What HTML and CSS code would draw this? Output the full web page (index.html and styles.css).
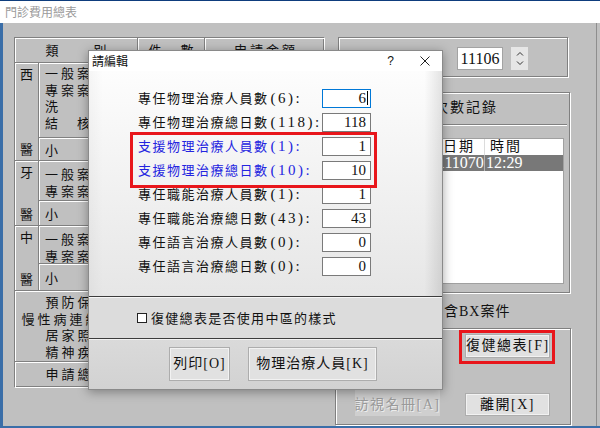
FILE: index.html
```html
<!DOCTYPE html>
<html lang="zh-Hant">
<head>
    <meta charset="UTF-8">
    <meta name="viewport" content="width=device-width, initial-scale=1.0">
    <title>門診費用總表</title>
    <link rel="stylesheet" href="styles.css">
</head>
<body>
    <div class="app-title">門診費用總表</div>

    <div class="client">
        <div class="fee-table">
            <div class="th th-kind">類　　別</div>
            <div class="th">件　數</div>
            <div class="th">申請金額</div>

            <div class="cell side">西<span>醫</span></div>
            <div class="cell items">一般案件<br>專案案件<br>洗　　　腎<br>結　核</div>
            <div class="cell"></div>
            <div class="cell"></div>
            <div class="cell sub">小　　　計</div>
            <div class="cell"></div>
            <div class="cell"></div>

            <div class="cell side">牙<span>醫</span></div>
            <div class="cell items items-short">一般案件<br>專案案件</div>
            <div class="cell"></div>
            <div class="cell"></div>
            <div class="cell sub">小　　　計</div>
            <div class="cell"></div>
            <div class="cell"></div>

            <div class="cell side">中<span>醫</span></div>
            <div class="cell items items-short">一般案件<br>專案案件</div>
            <div class="cell"></div>
            <div class="cell"></div>
            <div class="cell sub">小　　　計</div>
            <div class="cell"></div>
            <div class="cell"></div>

            <div class="cell other">預防保健<br>慢性病連續處方<br>居家照護<br>精神疾病</div>
            <div class="cell"></div>
            <div class="cell"></div>

            <div class="cell total">申請總額</div>
            <div class="cell"></div>
            <div class="cell"></div>
        </div>

        <div class="side-panel">
            <div class="group group-month">
                <div class="spin">
                    <div class="spin-value">11106</div>
                    <div class="spin-buttons">
                        <svg width="8" height="5" viewBox="0 0 8 5"><polyline points="1,4.5 4,1.5 7,4.5" fill="none" stroke="#333" stroke-width="1"/></svg>
                        <svg width="8" height="5" viewBox="0 0 8 5"><polyline points="1,0.5 4,3.5 7,0.5" fill="none" stroke="#333" stroke-width="1"/></svg>
                    </div>
                </div>
            </div>

            <div class="group group-log">
                <div class="group-title">列印次數記錄</div>
                <div class="rule"></div>
                <div class="log-list">
                    <div class="log-row log-head">
                        <span class="col-seq">序</span>
                        <span class="col-date">日期</span>
                        <span class="col-time">時間</span>
                    </div>
                    <div class="log-row selected">
                        <span class="col-seq">1</span>
                        <span class="col-date">1110701</span>
                        <span class="col-time">12:29</span>
                    </div>
                </div>
            </div>

            <div class="bx-option"><span class="check"></span>含BX案件</div>

            <div class="group group-actions">
                <div class="action-slot"></div>
                <div class="mark-wrap"><button class="btn">復健總表[F]</button></div>
                <div class="btn-disabled">訪視名冊[A]</div>
                <div class="exit-slot"><button class="btn">離開[X]</button></div>
            </div>
        </div>
    </div>

    <div class="dialog">
        <div class="dlg-title">
            <span>請編輯</span>
            <span class="dlg-help">?</span>
            <svg class="dlg-close" width="10" height="10" viewBox="0 0 10 10"><path d="M0.5 0.5 L9.5 9.5 M9.5 0.5 L0.5 9.5" stroke="#222" stroke-width="1"/></svg>
        </div>

        <div class="dlg-body">
            <div class="field">
                <span class="field-label">專任物理治療人員數<span class="num">(6):</span></span>
                <span class="field-input focus">6<span class="caret"></span></span>
            </div>
            <div class="field">
                <span class="field-label">專任物理治療總日數<span class="num">(118):</span></span>
                <span class="field-input">118</span>
            </div>
            <div class="field">
                <span class="field-label support">支援物理治療人員數<span class="num">(1):</span></span>
                <span class="field-input">1</span>
            </div>
            <div class="field">
                <span class="field-label support">支援物理治療總日數<span class="num">(10):</span></span>
                <span class="field-input">10</span>
            </div>
            <div class="field field-gap">
                <span class="field-label">專任職能治療人員數<span class="num">(1):</span></span>
                <span class="field-input">1</span>
            </div>
            <div class="field">
                <span class="field-label">專任職能治療總日數<span class="num">(43):</span></span>
                <span class="field-input">43</span>
            </div>
            <div class="field">
                <span class="field-label">專任語言治療人員數<span class="num">(0):</span></span>
                <span class="field-input">0</span>
            </div>
            <div class="field">
                <span class="field-label">專任語言治療總日數<span class="num">(0):</span></span>
                <span class="field-input">0</span>
            </div>
        </div>

        <div class="dlg-option"><span class="check"></span>復健總表是否使用中區的樣式</div>

        <div class="dlg-buttons">
            <button class="btn btn-print">列印[O]</button>
            <button class="btn btn-staff">物理治療人員[K]</button>
        </div>

        <div class="mark mark-support"></div>
    </div>
</body>
</html>
```

FILE: styles.css
```css
:root {
    --face: #c0c0c0;
    --dark: #808080;
    --btn-face: #e1e1e1;
    --btn-line: #adadad;
    --mark: #e8161b;
    --ui-font: "Liberation Serif", "Noto Sans CJK TC", serif;
}

body {
    margin: 0;
    width: 600px;
    height: 428px;
    position: relative;
    overflow: hidden;
    background: var(--face);
    font-family: var(--ui-font);
    color: #111;
}

.app-title {
    height: 22px;
    border-top: 1px solid #0e3d7d;
    padding-left: 5px;
    background: #fff;
    color: #9b9b9b;
    font-family: "Noto Sans CJK TC", sans-serif;
    font-size: 12px;
    line-height: 22px;
}

.client {
    display: flex;
    gap: 11px;
    box-sizing: border-box;
    height: 405px;
    padding: 14px 0 0 11px;
    border-left: 3px solid #3a6ea8;
    border-bottom: 2px solid #3a6ea8;
    box-shadow: inset -3px 0 0 var(--face), inset -4px 0 0 #8e8e8e;
}

/* left fee table */
.fee-table {
    flex: none;
    display: grid;
    grid-template-columns: 24px 99px 67px 120px;
    grid-template-rows: 25px 75px 23px 40px 25px 38px 27px 71px 26px;
    height: 350px;
    box-shadow: inset -1px -1px 0 var(--dark), 1px 1px 0 #fff;
    font-family: "Noto Sans CJK TC", sans-serif;
    font-size: 13px;
    line-height: 16.5px;
    letter-spacing: 3px;
    white-space: nowrap;
    overflow: hidden;
}

.th,
.cell {
    border-left: 1px solid var(--dark);
    border-top: 1px solid var(--dark);
    box-shadow: inset 1px 1px 0 #fff;
}

.th {
    display: flex;
    align-items: center;
    justify-content: center;
    padding-left: 3px;
}

.th-kind {
    grid-column: span 2;
}

.side {
    grid-row: span 2;
    display: flex;
    flex-direction: column;
    justify-content: space-between;
    align-items: center;
    padding: 3px 0;
    line-height: 16px;
    letter-spacing: 0;
}

.items {
    padding: 2px 0 0 6px;
}

.items-short {
    padding-top: 5px;
}

.sub {
    display: flex;
    align-items: center;
    padding: 2px 0 0 6px;
}

.other {
    grid-column: span 2;
    padding: 3px 0 0 3px;
    text-align: center;
}

.total {
    grid-column: span 2;
    display: flex;
    align-items: center;
    justify-content: center;
    padding-left: 3px;
}

/* right side */
.side-panel {
    flex: none;
    width: 236px;
    display: flex;
    flex-direction: column;
}

.group {
    box-sizing: border-box;
    border: 1px solid var(--dark);
    box-shadow: inset 1px 1px 0 #fff, 1px 1px 0 #fff;
}

.group-month {
    margin-left: 3px;
    width: 230px;
    height: 40px;
    padding: 9px 0 0 118px;
}

.spin {
    display: flex;
    gap: 8px;
}

.spin-value {
    width: 46px;
    height: 23px;
    box-sizing: border-box;
    border: 1px solid #a3a3a3;
    background: #fff;
    font-size: 16px;
    line-height: 21px;
    text-align: center;
}

.spin-buttons {
    width: 17px;
    height: 23px;
    background: #e6e6e6;
    display: flex;
    flex-direction: column;
    align-items: center;
    justify-content: space-evenly;
}

.spin-buttons svg {
    display: block;
}

.group-log {
    margin: 15px 0 0 3px;
    width: 232px;
    height: 201px;
    padding: 7px 2px 0 7px;
}

.group-title {
    padding-left: 56px;
    font-size: 14px;
    line-height: 16px;
    letter-spacing: 2px;
    white-space: nowrap;
}

.rule {
    margin-top: 8px;
    border-top: 1px solid var(--dark);
    border-bottom: 1px solid #fff;
}

.log-list {
    margin: 12px 3px 0 0;
    height: 146px;
    box-sizing: border-box;
    border: 1px solid #a0a0a0;
    background: #fff;
}

.log-row {
    display: grid;
    grid-template-columns: 90px 48px 1fr;
    height: 16px;
    line-height: 16px;
    white-space: nowrap;
}

.log-row span {
    overflow: hidden;
    box-sizing: border-box;
}

.log-head {
    font-size: 14px;
    letter-spacing: 2px;
}

.log-head .col-date {
    padding-left: 6px;
    border-right: 1px solid #dcdcdc;
}

.log-head .col-time {
    padding-left: 5px;
}

.selected {
    background: #787878;
    color: #fff;
    font-size: 16px;
}

.selected .col-date {
    border-right: 1px solid #b4b4b4;
}

.selected .col-time {
    padding-left: 1px;
}

.bx-option {
    margin-top: 11px;
    height: 16px;
    display: flex;
    align-items: center;
    padding-left: 91px;
    font-size: 14px;
    line-height: 16px;
    letter-spacing: 1px;
    white-space: nowrap;
}

.check {
    display: inline-block;
    box-sizing: border-box;
    width: 10px;
    height: 10px;
    border: 1px solid #222;
    background: #fff;
}

.bx-option .check {
    width: 13px;
    height: 13px;
    margin-right: 5px;
}

.group-actions {
    margin-top: 8px;
    width: 236px;
    height: 97px;
    display: grid;
    grid-template-columns: 85px 96px;
    grid-template-rows: 34px 26px;
    column-gap: 19px;
    row-gap: 26px;
    align-content: start;
    padding: 1px 0 0 19px;
}

.btn {
    margin: 0;
    padding: 0;
    box-sizing: border-box;
    background: var(--btn-face);
    border: 1px solid var(--btn-line);
    box-shadow: inset 0 0 0 1px #f2f2f2;
    color: #111;
    font-family: var(--ui-font);
    font-size: 14px;
    line-height: 16px;
    letter-spacing: 1.5px;
    white-space: nowrap;
}

.mark-wrap {
    box-sizing: border-box;
    border: 3px solid var(--mark);
    padding: 1px 2px 3px 3px;
}

.mark-wrap .btn {
    display: block;
    width: 85px;
    height: 24px;
}

.btn-disabled {
    display: flex;
    align-items: center;
    justify-content: center;
    background: #cfcfcf;
    color: #9a9a9a;
    text-shadow: 1px 1px 0 #ececec;
    font-size: 14px;
    letter-spacing: 1.5px;
    white-space: nowrap;
}

.exit-slot .btn {
    display: block;
    margin: 3px 0 0 6px;
    width: 85px;
    height: 23px;
}

/* edit dialog */
.dialog {
    position: absolute;
    left: 88px;
    top: 50px;
    width: 355px;
    height: 340px;
    box-sizing: border-box;
    border: 1px solid #8a8a8a;
    background: #fff;
    box-shadow: 0 2px 10px rgba(0, 0, 0, 0.35);
}

.dlg-title {
    height: 20px;
    display: flex;
    align-items: center;
    padding-left: 3px;
    font-family: "Noto Sans CJK TC", sans-serif;
    font-size: 12px;
    line-height: 20px;
}

.dlg-help {
    margin-left: auto;
    font-family: "Liberation Sans", sans-serif;
    font-size: 12px;
}

.dlg-close {
    display: block;
    margin: 0 12px 0 26px;
}

.dlg-body {
    height: 225px;
    box-sizing: border-box;
    padding: 18px 0 0 49px;
    background:
        linear-gradient(to right, rgba(0, 0, 0, 0.03), transparent 4%, transparent 95%, rgba(0, 0, 0, 0.1)),
        linear-gradient(#fdfdfd, #e6e6e6);
}

.field {
    display: flex;
    align-items: center;
    height: 19px;
    margin-bottom: 5px;
}

.field-gap {
    margin-top: 2px;
}

.field-label {
    width: 184px;
    font-size: 13px;
    line-height: 16px;
    letter-spacing: 1.5px;
    white-space: nowrap;
}

.field-label .num {
    margin-left: 2px;
    font-size: 15px;
    letter-spacing: 2.5px;
}

.support {
    color: #2424e0;
}

.field-input {
    width: 49px;
    height: 19px;
    box-sizing: border-box;
    border: 1px solid #7a7a7a;
    background: #fff;
    padding-right: 4px;
    text-align: right;
    font-size: 15px;
    line-height: 17px;
}

.field-input.focus {
    border-color: #0078d7;
    padding-right: 2px;
}

.caret {
    display: inline-block;
    width: 1px;
    height: 14px;
    margin-left: 1px;
    background: #000;
    vertical-align: -2px;
}

.dlg-option {
    height: 42px;
    box-sizing: border-box;
    display: flex;
    align-items: center;
    padding-left: 48px;
    border-top: 1px solid #3c3c3c;
    box-shadow: inset 0 1px 0 #f6f6f6;
    background: #dcdcdc;
    font-size: 13px;
    letter-spacing: 1.3px;
    white-space: nowrap;
}

.dlg-option .check {
    margin-right: 4px;
}

.dlg-buttons {
    height: 51px;
    box-sizing: border-box;
    display: flex;
    align-items: flex-start;
    gap: 18px;
    padding: 8px 0 0 80px;
    border-top: 1px solid #3c3c3c;
    box-shadow: inset 0 1px 0 #f2f2f2;
    background: linear-gradient(#dadada, #d2d2d2);
}

.dlg-buttons .btn {
    height: 34px;
    letter-spacing: 1px;
}

.btn-print {
    width: 61px;
}

.btn-staff {
    width: 129px;
}

.mark {
    position: absolute;
    box-sizing: border-box;
    border: 3px solid var(--mark);
}

.mark-support {
    left: 41px;
    top: 81px;
    width: 247px;
    height: 56px;
}
```
